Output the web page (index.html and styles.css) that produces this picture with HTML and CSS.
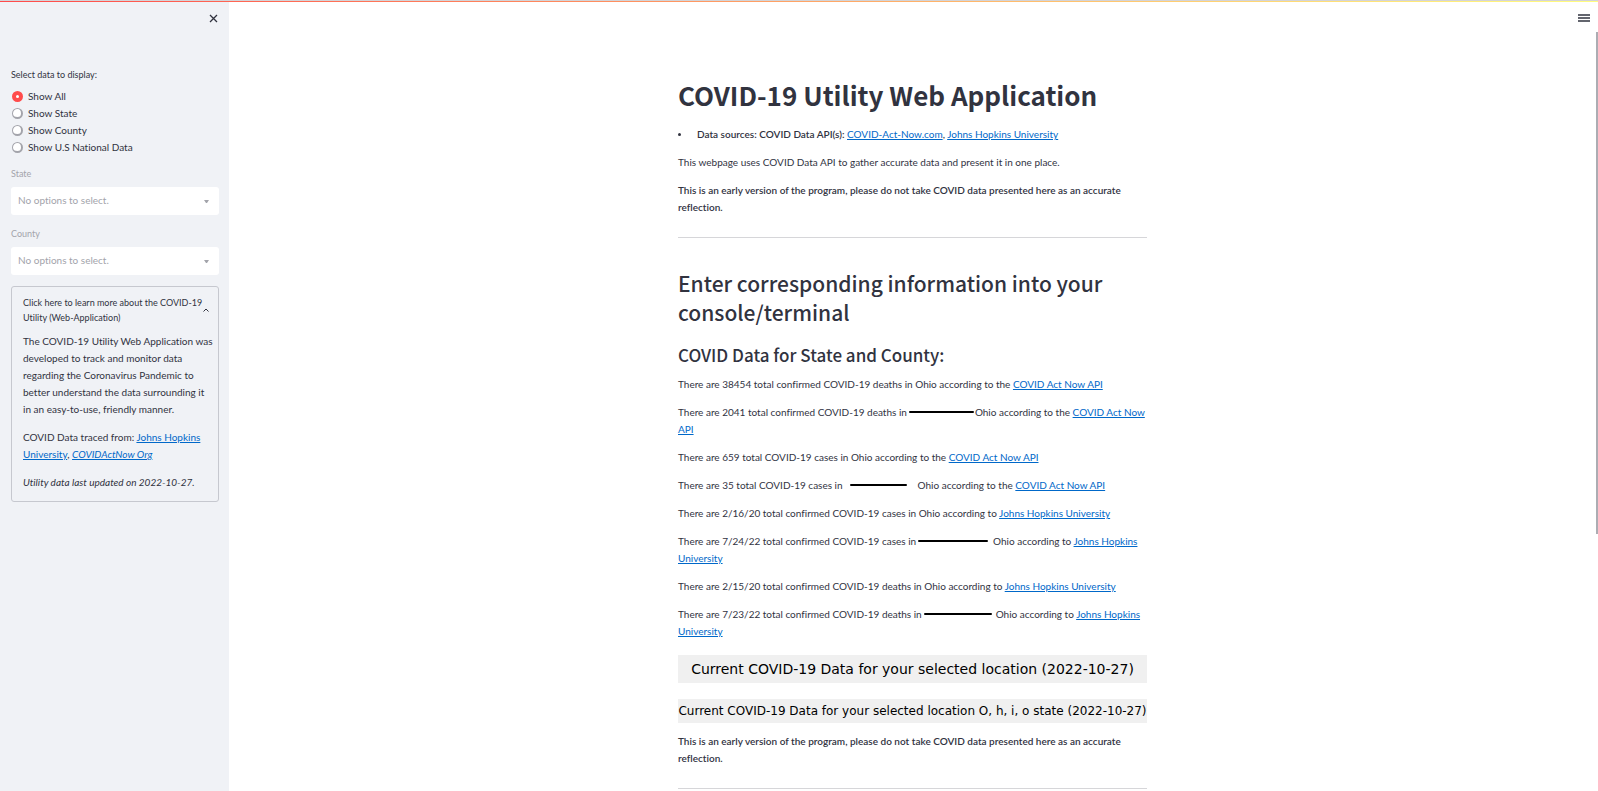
FILE: index.html
```html
<!DOCTYPE html>
<html lang="en">
<head>
<meta charset="utf-8">
<title>COVID-19 Utility Web Application</title>
<link rel="stylesheet" href="styles.css">
</head>
<body>
<div class="decoration"></div>
<div class="app">
  <aside class="sidebar">
    <button class="close" type="button" aria-label="Close sidebar">
      <svg width="9" height="9" viewBox="0 0 9 9"><path d="M1 1L8 8M8 1L1 8" stroke="#31333f" stroke-width="1.3" fill="none"/></svg>
    </button>
    <fieldset class="radios">
      <legend class="label">Select data to display:</legend>
      <label class="radio"><input type="radio" name="view" checked>Show All</label>
      <label class="radio"><input type="radio" name="view">Show State</label>
      <label class="radio"><input type="radio" name="view">Show County</label>
      <label class="radio"><input type="radio" name="view">Show U.S National Data</label>
    </fieldset>
    <div class="field">
      <label class="label" for="state">State</label>
      <div class="select-wrap">
        <select id="state" disabled><option>No options to select.</option></select>
        <svg class="caret" width="5" height="3" viewBox="0 0 5 3"><path d="M0 0H5L3 3H2Z" fill="#a3a4ab"/></svg>
      </div>
    </div>
    <div class="field">
      <label class="label" for="county">County</label>
      <div class="select-wrap">
        <select id="county" disabled><option>No options to select.</option></select>
        <svg class="caret" width="5" height="3" viewBox="0 0 5 3"><path d="M0 0H5L3 3H2Z" fill="#a3a4ab"/></svg>
      </div>
    </div>
    <details class="expander" open>
      <summary>
        <span>Click here to learn more about the <span class="term">COVID-19</span> Utility (Web-Application)</span>
        <svg width="6" height="4" viewBox="0 0 6 4"><path d="M.5 3.5L3 1L5.5 3.5" stroke="#31333f" fill="none"/></svg>
      </summary>
      <div class="expander-body">
        <p>The COVID-19 Utility Web Application was developed to track and monitor data regarding the Coronavirus Pandemic to better understand the data surrounding it in an easy-to-use, friendly manner.</p>
        <p>COVID Data traced from: <a href="#">Johns Hopkins University</a>, <a href="#"><em>COVIDActNow Org</em></a></p>
        <p><em>Utility data last updated on 2022-10-27.</em></p>
      </div>
    </details>
  </aside>
  <main class="main">
    <button class="menu" type="button" aria-label="Main menu">
      <svg width="12" height="8" viewBox="0 0 12 8"><path d="M0 1H12M0 4H12M0 7H12" stroke="#31333f" stroke-width="1.5"/></svg>
    </button>
    <div class="scroll-thumb"></div>
    <div class="content">
      <h1>COVID-19 Utility Web Application</h1>
      <ul class="sources"><li><strong>Data sources: COVID Data API(s):</strong> <a href="#">COVID-Act-Now.com</a>, <a href="#">Johns Hopkins University</a></li></ul>
      <p>This webpage uses COVID Data API to gather accurate data and present it in one place.</p>
      <p><strong>This is an early version of the program, please do not take COVID data presented here as an accurate reflection.</strong></p>
      <hr>
      <h2>Enter corresponding information into your console/terminal</h2>
      <h3>COVID Data for State and County:</h3>
      <p>There are 38454 total confirmed COVID-19 deaths in Ohio according to the <a href="#">COVID Act Now API</a></p>
      <p>There are 2041 total confirmed COVID-19 deaths in<span class="redact redact-a"></span>Ohio according to the <a href="#">COVID Act Now API</a></p>
      <p>There are 659 total COVID-19 cases in Ohio according to the <a href="#">COVID Act Now API</a></p>
      <p>There are 35 total COVID-19 cases in<span class="redact redact-b"></span>Ohio according to the <a href="#">COVID Act Now API</a></p>
      <p>There are 2/16/20 total confirmed COVID-19 cases in Ohio according to <a href="#">Johns Hopkins University</a></p>
      <p>There are 7/24/22 total confirmed COVID-19 cases in<span class="redact redact-c"></span>Ohio according to <a href="#">Johns Hopkins University</a></p>
      <p>There are 2/15/20 total confirmed COVID-19 deaths in Ohio according to <a href="#">Johns Hopkins University</a></p>
      <p>There are 7/23/22 total confirmed COVID-19 deaths in<span class="redact redact-d"></span>Ohio according to <a href="#">Johns Hopkins University</a></p>
      <div class="figure figure-large">Current COVID-19 Data for your selected location (2022-10-27)</div>
      <div class="figure figure-small">Current COVID-19 Data for your selected location O, h, i, o state (2022-10-27)</div>
      <p><strong>This is an early version of the program, please do not take COVID data presented here as an accurate reflection.</strong></p>
      <hr>
    </div>
  </main>
</div>
</body>
</html>
```
FILE: styles.css
```css
* { box-sizing: border-box; }
body {
  margin: 0;
  color: #31333f;
  background: #fff;
  font: 400 10px/17px Lato, "Noto Sans CJK SC", sans-serif;
  font-variant-ligatures: none;
}
a { color: #0068c9; text-decoration: underline; text-underline-offset: 1px; }
p { margin: 0 0 11px; }
strong { font-weight: 600; }
button { border: 0; padding: 0; background: none; display: flex; }
.decoration {
  position: fixed;
  inset: 0 0 auto;
  z-index: 2;
  height: 2px;
  border-top: 1px solid #d3d4d8;
  background: linear-gradient(90deg, #ff4b4b, #fffd80);
}
.app { display: flex; height: 100vh; overflow: hidden; }

.sidebar {
  flex: 0 0 229px;
  padding: 14px 10px 11px 11px;
  background: #f0f2f6;
}
.close { margin: 0 1px 44px auto; }
.label { display: block; padding: 0; font-size: 9px; line-height: 15px; }
.radios { margin: 0 0 10px; padding: 0; border: 0; }
.radios .label { margin-bottom: 6px; }
.radio { display: flex; align-items: center; gap: 5px; line-height: 17px; }
.radio input {
  appearance: none;
  width: 11px;
  height: 11px;
  margin: 0 0 0 1px;
  border: 2px solid #a3a4ab;
  border-width: 1px 2px 2px 1px;
  border-radius: 50%;
  background: #fff;
}
.radio input:checked { border: 4px solid #ff4b4b; }
.field { margin-bottom: 11px; color: #a3a4ab; }
.field .label { margin-bottom: 6px; }
.select-wrap { position: relative; }
.select-wrap select {
  appearance: none;
  display: block;
  width: 100%;
  height: 28px;
  padding: 0 7px 2px;
  border: 0;
  border-radius: 3px;
  background: #fff;
  color: #a3a4ab;
  font: inherit;
  opacity: 1;
}
.caret { position: absolute; right: 10px; top: 13px; }
.expander { border: 1px solid #c6c8cf; border-radius: 3px; padding: 8px 5px 0 11px; }
.expander summary {
  display: flex;
  align-items: center;
  justify-content: space-between;
  list-style: none;
  font-size: 9px;
  line-height: 15px;
}
.expander summary svg { flex: none; margin-right: 4px; }
.term { white-space: nowrap; }
.expander-body { padding-top: 8px; }
.expander-body p:last-child { margin-bottom: 10px; }

.main { position: relative; flex: 1; min-width: 0; padding: 64px 13px 0 11px; }
.menu { position: absolute; top: 14px; right: 8px; }
.scroll-thumb { position: absolute; top: 32px; right: 0; width: 2px; height: 502px; background: #acadb3; }
.content { max-width: 469px; margin: 0 auto; }
h1, h2, h3 { margin: 0; font-family: "Noto Sans CJK SC", sans-serif; }
h1 { padding: 13px 0 14px; font-size: 26px; line-height: 35px; font-weight: 700; }
h2 { padding: 0 0 13px; font-size: 21px; line-height: 29px; font-weight: 500; }
h3 { padding: 5px 0 11px; font-size: 17px; line-height: 20px; font-weight: 500; }
.sources { margin: 0 0 11px; padding: 0; list-style: none; }
.sources li::before {
  content: "";
  display: inline-block;
  width: 3px;
  height: 3px;
  margin-right: 16px;
  border-radius: 50%;
  background: #31333f;
  vertical-align: 2px;
}
hr { margin: 21px 0 31px; border: 0; border-top: 1px solid #d6d6d9; }
.redact { display: inline-block; height: 2px; background: #000; vertical-align: 3px; border-radius: 1px; }
.redact-a { width: 65px; margin: 0 1px 0 2px; }
.redact-b { width: 57px; margin: 0 11px 0 7px; }
.redact-c { width: 70px; margin: 0 5px 0 2px; }
.redact-d { width: 68px; margin: 0 4px 0 2px; }
.figure { background: #f0f0f0; color: #000; font-family: "DejaVu Sans", sans-serif; text-align: center; white-space: nowrap; }
.figure-large { margin: 15px 0 16px; font-size: 14px; line-height: 28px; }
.figure-small { margin-bottom: 10px; font-size: 12px; line-height: 24px; }
```
